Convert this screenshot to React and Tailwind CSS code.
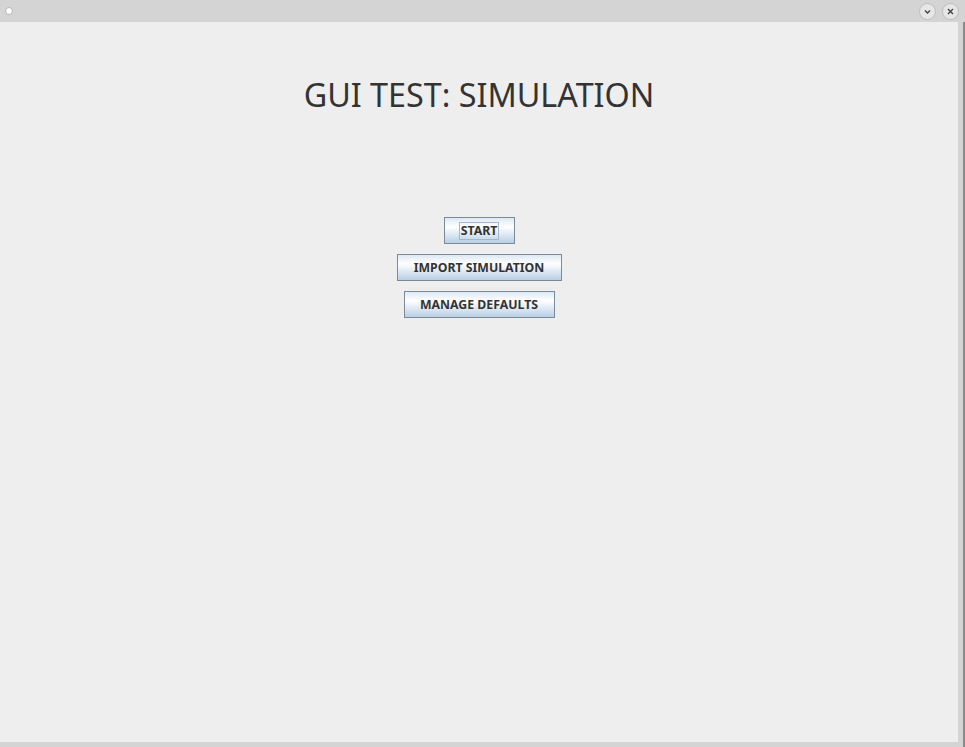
import React from "react";

const JButton = ({ label, focused, width }) => (
  <button
    className={`h-[27px] ${width} border border-[#7a8a99] bg-[linear-gradient(to_bottom,#dde8f3_0%,#ffffff_35%,#b8cfe5_100%)] flex items-center justify-center text-[12.3px] font-bold text-[#333333] font-['Noto_Sans',sans-serif]`}
  >
    {focused ? (
      <span className="border border-[#a3b8cc] px-[1px] leading-[16px]">{label}</span>
    ) : (
      <span className="leading-[16px]">{label}</span>
    )}
  </button>
);

const App = () => {
  return (
    <div className="w-[965px] h-[747px] bg-[#d4d4d4] flex flex-col overflow-hidden font-['Noto_Sans',sans-serif]">
      {/* title bar */}
      <div className="h-[22px] flex items-center justify-between pl-[5px] pr-[6px] shrink-0">
        <div className="w-[8px] h-[8px] rounded-full bg-white border border-[#b5b5b5]" />
        <div className="flex items-center gap-[6px]">
          <div className="w-[17px] h-[17px] rounded-full bg-[#e6e6e6] border border-[#bdbdbd] flex items-center justify-center">
            <svg width="9" height="9" viewBox="0 0 9 9">
              <path d="M2 3.5 L4.5 6 L7 3.5" fill="none" stroke="#444" strokeWidth="1.4" />
            </svg>
          </div>
          <div className="w-[17px] h-[17px] rounded-full bg-[#e6e6e6] border border-[#bdbdbd] flex items-center justify-center">
            <svg width="9" height="9" viewBox="0 0 9 9">
              <path d="M2 2 L7 7 M7 2 L2 7" fill="none" stroke="#444" strokeWidth="1.4" />
            </svg>
          </div>
        </div>
      </div>
      <div className="flex flex-1">
        {/* content */}
        <div className="w-[958px] h-[720px] bg-[#eeeeee] flex flex-col items-center">
          <h1 className="mt-[56px] text-[32.3px] leading-[32px] text-[#333333] font-normal">
            GUI TEST: SIMULATION
          </h1>
          <div className="mt-[107px] flex flex-col items-center gap-[10px]">
            <JButton label="START" focused width="w-[71px]" />
            <JButton label="IMPORT SIMULATION" width="w-[165px]" />
            <JButton label="MANAGE DEFAULTS" width="w-[151px]" />
          </div>
        </div>
        <div className="w-[5px]" />
        <div className="w-[2px] h-full bg-[#8a8a8a]" />
      </div>
    </div>
  );
};

export default App;
